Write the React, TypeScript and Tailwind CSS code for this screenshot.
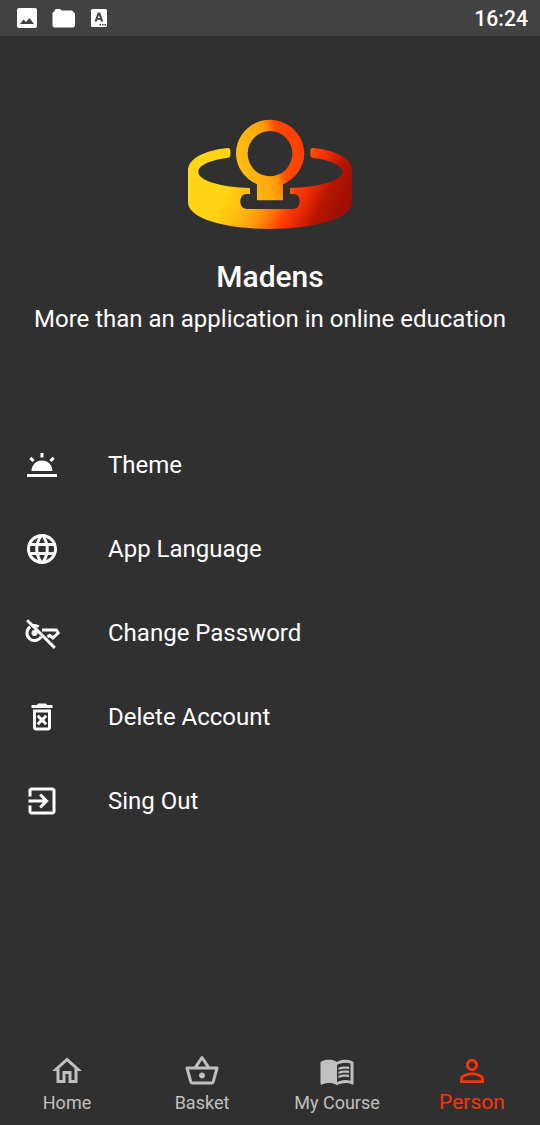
import type { ReactNode } from "react";
import {
  MdWbTwilight,
  MdLanguage,
  MdOutlineDeleteForever,
  MdOutlineHome,
  MdOutlineShoppingBasket,
  MdMenuBook,
  MdPersonOutline,
} from "react-icons/md";

function KeyOffIcon() {
  return (
    <svg viewBox="0 0 24 24" className="size-9" fill="none" stroke="currentColor" strokeWidth="2">
      <path d="M4.2 7.9A5 5 0 1 0 11.4 14.4" />
      <path d="M5.6 7.2A5 5 0 0 1 9.8 7.8" />
      <circle cx="7" cy="12" r="2" fill="currentColor" stroke="none" />
      <path d="M12 10H21.5L22.8 12L19.3 15.3L17.2 13.7L15.6 14.4" />
      <path d="M2.1 3.5L20.5 21.9" />
    </svg>
  );
}

function ExitIcon() {
  return (
    <svg viewBox="0 0 24 24" className="size-9" fill="currentColor">
      <path d="M10.09 15.59L11.5 17l5-5-5-5-1.41 1.41L12.67 11H3v2h9.67l-2.58 2.59zM19 3H5c-1.11 0-2 .9-2 2v4h2V5h14v14H5v-4H3v4c0 1.1.89 2 2 2h14c1.1 0 2-.9 2-2V5c0-1.1-.9-2-2-2z" />
    </svg>
  );
}

function Logo() {
  return (
    <svg viewBox="0 0 600 420" className="h-[140px] w-[200px]">
      <defs>
        <linearGradient id="band" gradientUnits="userSpaceOnUse" x1="125" y1="63" x2="534" y2="270">
          <stop offset="0" stopColor="#ffd615" />
          <stop offset="0.28" stopColor="#ffd312" />
          <stop offset="0.45" stopColor="#ffb40f" />
          <stop offset="0.53" stopColor="#ff9a0c" />
          <stop offset="0.61" stopColor="#ff7408" />
          <stop offset="0.69" stopColor="#ff4000" />
          <stop offset="0.77" stopColor="#ea2a00" />
          <stop offset="0.88" stopColor="#b41600" />
          <stop offset="1" stopColor="#a01000" />
        </linearGradient>
        <linearGradient id="ring" gradientUnits="userSpaceOnUse" x1="215" y1="163" x2="425" y2="117">
          <stop offset="0" stopColor="#ffbc10" />
          <stop offset="0.3" stopColor="#ffa90e" />
          <stop offset="0.42" stopColor="#ff940c" />
          <stop offset="0.56" stopColor="#ff4a02" />
          <stop offset="1" stopColor="#fa3a00" />
        </linearGradient>
      </defs>
      <path
        fill="url(#band)"
        d="M172 129Q181 128 181 137V151Q181 157 173 159C128 164 85 178 85 201C85 227 155 247 240 249V267H229C216 267 211 279 211 289C211 302 218 312 231 312H370C382 312 389 302 389 289C389 276 383 267 371 267H360V249C445 247 517 227 517 201C517 178 473 164 429 159Q421 157 421 150V137Q421 128 430 129C493 136 546 157 546 197V292C546 341 433 372 300 372C167 372 54 341 54 292V197C54 157 110 136 172 129Z"
      />
      <path
        fill="url(#ring)"
        fillRule="evenodd"
        d="M300 44C356 44 403 90 403 146C403 187 374 222 339 238V286H261V238C226 222 198 187 198 146C198 90 244 44 300 44ZM300 78A67 68 0 1 0 300 214A67 68 0 1 0 300 78Z"
      />
    </svg>
  );
}

function StatusBar() {
  return (
    <header className="flex h-9 items-center justify-between bg-[#424242] pl-[17px] pr-3 text-white">
      <svg viewBox="0 0 92 20" className="h-5 w-[92px]" fill="currentColor">
        <path fillRule="evenodd" d="M2 0H18Q20 0 20 2V18Q20 20 18 20H2Q0 20 0 18V2Q0 0 2 0ZM3 16H17L12.5 10L9 14L6.5 11.5Z" />
        <path d="M38.5 1H43L44.5 2.500H55L58 5.500V18L56.500 19.500H37L35.500 18V5L37.500 3Z" />
        <path fillRule="evenodd" d="M75.5 1H88.5Q90 1 90 2.5V17.5Q90 19 88.5 19H75.5Q74 19 74 17.5V2.5Q74 1 75.5 1ZM80.7 4.5L77.6 13.5H79.8L80.4 11.7H83.4L84 13.5H86.3L83.1 4.5ZM81.9 7L82.9 10H80.9ZM82.5 16V17.5H84V16ZM85 16V17.5H86.5V16ZM87.5 16V17.5H89V16Z" />
      </svg>
      <span className="pt-0.5 text-[21.2px] font-medium leading-none">16:24</span>
    </header>
  );
}

const menu: { label: string; icon: ReactNode }[] = [
  { label: "Theme", icon: <MdWbTwilight className="size-9" /> },
  { label: "App Language", icon: <MdLanguage className="size-9" /> },
  { label: "Change Password", icon: <KeyOffIcon /> },
  { label: "Delete Account", icon: <MdOutlineDeleteForever className="size-9" /> },
  { label: "Sing Out", icon: <ExitIcon /> },
];

const tabs: { label: string; icon: ReactNode; active?: boolean }[] = [
  { label: "Home", icon: <MdOutlineHome className="size-9" /> },
  { label: "Basket", icon: <MdOutlineShoppingBasket className="size-9" /> },
  { label: "My Course", icon: <MdMenuBook className="size-9" /> },
  { label: "Person", icon: <MdPersonOutline className="size-9" />, active: true },
];

export default function App() {
  return (
    <div className="flex h-[1125px] w-[540px] flex-col bg-[#303030] font-['Roboto',sans-serif] text-white">
      <StatusBar />
      <section className="flex flex-col items-center pt-[69px]">
        <Logo />
        <h1 className="mt-[14px] text-[30px] font-medium leading-9">Madens</h1>
        <p className="mt-[10px] whitespace-nowrap text-2xl leading-7">More than an application in online education</p>
      </section>
      <ul className="mt-[90px] flex flex-col">
        {menu.map((item) => (
          <li key={item.label} className="flex h-[84px] items-center gap-12 pl-6 text-2xl">
            {item.icon}
            <span>{item.label}</span>
          </li>
        ))}
      </ul>
      <nav className="mt-auto grid h-[84px] w-[539px] grid-cols-[135px_135px_135px_134px]">
        {tabs.map((tab) => (
          <div
            key={tab.label}
            className={
              tab.active
                ? "flex flex-col items-center pt-3 text-[21px] leading-[26px] text-[#ff3300]"
                : "flex flex-col items-center pr-px pt-3 text-lg leading-7 text-[#c0c0c0]"
            }
          >
            {tab.icon}
            <span>{tab.label}</span>
          </div>
        ))}
      </nav>
    </div>
  );
}
